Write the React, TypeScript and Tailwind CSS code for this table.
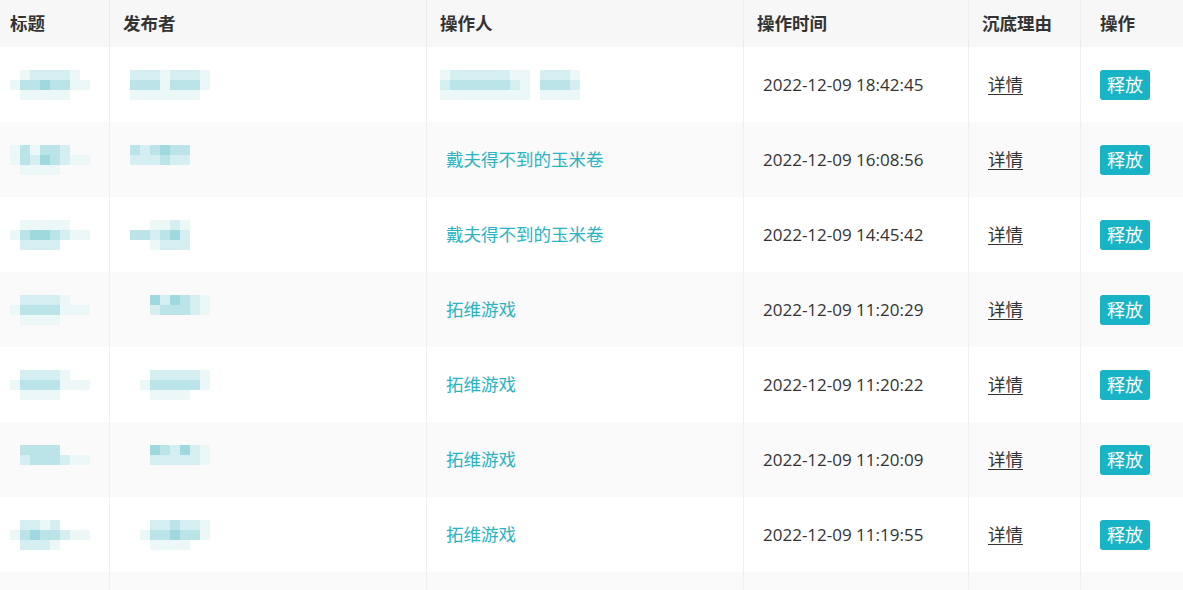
import React from "react";

// mosaic shade classes, index = digit in the pattern
const shades = [
  "bg-transparent",
  "bg-[#ecf7f8]",
  "bg-[#d4eef1]",
  "bg-[#bbe4e9]",
  "bg-[#a0d8df]",
];

type Row = {
  title: string[];
  publisher: string[];
  operator?: string;
  operatorMosaic?: string[];
  time: string;
};

const rows: Row[] = [
  {
    title: ["01222210", "13343311", "01111100"],
    publisher: ["22212221", "33313331", "11111110"],
    operatorMosaic: ["1222222110222100", "2333333210333200", "1111111110111100"],
    time: "2022-12-09 18:42:45",
  },
  {
    title: ["13133200", "13243211", "01111000"],
    publisher: ["32343300", "22232200", "00000000"],
    operator: "戴夫得不到的玉米卷",
    time: "2022-12-09 16:08:56",
  },
  {
    title: ["01111100", "13443211", "02222000"],
    publisher: ["00112100", "33234200", "00122200"],
    operator: "戴夫得不到的玉米卷",
    time: "2022-12-09 14:45:42",
  },
  {
    title: ["02222100", "13333111", "01111000"],
    publisher: ["00424321", "00233321", "00000000"],
    operator: "拓维游戏",
    time: "2022-12-09 11:20:29",
  },
  {
    title: ["02222100", "13333111", "01111000"],
    publisher: ["00222221", "01333331", "00111100"],
    operator: "拓维游戏",
    time: "2022-12-09 11:20:22",
  },
  {
    title: ["03333000", "02333211", "00000000"],
    publisher: ["00432421", "00222221", "00000000"],
    operator: "拓维游戏",
    time: "2022-12-09 11:20:09",
  },
  {
    title: ["02212000", "13433211", "02221000"],
    publisher: ["00223221", "01334331", "00111100"],
    operator: "拓维游戏",
    time: "2022-12-09 11:19:55",
  },
];

function Mosaic({ pattern }: { pattern: string[] }) {
  return (
    <div className="flex flex-col">
      {pattern.map((line, i) => (
        <div key={i} className="flex">
          {line.split("").map((d, j) => (
            <div key={j} className={`w-[10px] h-[10px] ${shades[Number(d)]}`} />
          ))}
        </div>
      ))}
    </div>
  );
}

const headers = ["标题", "发布者", "操作人", "操作时间", "沉底理由", "操作"];

export default function App() {
  return (
    <div className="w-[1183px] h-[590px] overflow-hidden bg-white text-[17px] text-[#333] font-['Open_Sans','Noto_Sans_CJK_SC',sans-serif]">
      <table className="w-[1183px] table-fixed border-separate border-spacing-0">
        <colgroup>
          <col className="w-[110px]" />
          <col className="w-[317px]" />
          <col className="w-[317px]" />
          <col className="w-[225px]" />
          <col className="w-[112px]" />
          <col className="w-[102px]" />
        </colgroup>
        <thead>
          <tr className="h-[47px] bg-[#f7f7f7]">
            {headers.map((h, i) => (
              <th
                key={h}
                className={`text-left font-bold text-[17.5px] text-[#333] border-r border-[#ececec] last:border-r-0 ${
                  i === 0 ? "pl-[10px]" : i === 5 ? "pl-[19px]" : "pl-[13px]"
                }`}
              >
                {h}
              </th>
            ))}
          </tr>
        </thead>
        <tbody>
          {rows.map((r, i) => (
            <tr key={i} className={`h-[75px] ${i % 2 === 1 ? "bg-[#fafafa]" : "bg-white"}`}>
              <td className="pl-[10px] border-r border-[#f0f0f0]">
                <Mosaic pattern={r.title} />
              </td>
              <td className="pl-[20px] border-r border-[#f0f0f0]">
                <Mosaic pattern={r.publisher} />
              </td>
              <td className="pl-[13px] border-r border-[#f0f0f0]">
                {r.operator ? (
                  <span className="pl-[6px] text-[17.5px] text-[#2ab3c1] cursor-pointer">{r.operator}</span>
                ) : (
                  <Mosaic pattern={r.operatorMosaic!} />
                )}
              </td>
              <td className="pl-[19px] border-r border-[#f0f0f0] text-[17px]">{r.time}</td>
              <td className="pl-[19px] border-r border-[#f0f0f0]">
                <span className="underline underline-offset-[3px] text-[17.5px] cursor-pointer">详情</span>
              </td>
              <td className="pl-[19px]">
                <button className="h-[30px] px-[7px] rounded-[3px] bg-[#18b4c6] text-white text-[18px] leading-[30px]">
                  释放
                </button>
              </td>
            </tr>
          ))}
          <tr className="h-[75px] bg-[#fafafa]">
            <td className="border-r border-[#f0f0f0]" />
            <td className="border-r border-[#f0f0f0]" />
            <td className="border-r border-[#f0f0f0]" />
            <td className="border-r border-[#f0f0f0]" />
            <td className="border-r border-[#f0f0f0]" />
            <td />
          </tr>
        </tbody>
      </table>
    </div>
  );
}
